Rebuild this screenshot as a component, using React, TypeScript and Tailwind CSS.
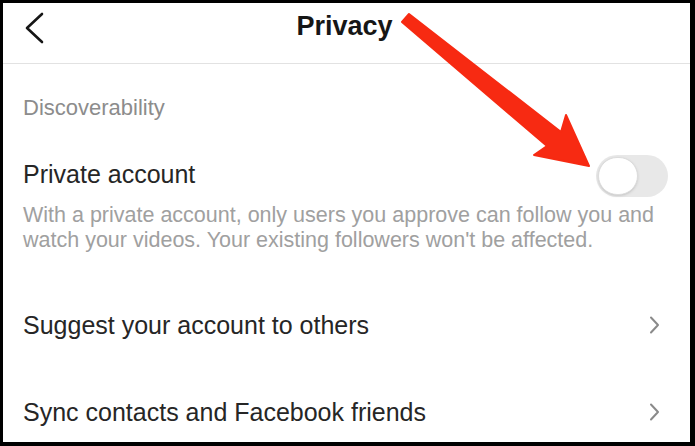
import { useState } from 'react'

function Chevron({ className }: { className?: string }) {
  return (
    <svg width="12" height="20" viewBox="0 0 12 20" className={className}>
      <path d="M3 2.5 L10 10 L3 17.5" fill="none" stroke="#8a8a8a" strokeWidth="2" strokeLinecap="round" strokeLinejoin="round" />
    </svg>
  )
}

export default function App() {
  const [isPrivate, setIsPrivate] = useState(false)

  return (
    <div className="w-[695px] h-[446px] bg-black pt-[3px] pl-[3px] pr-[5px] pb-[4px]" style={{ fontFamily: '"Liberation Sans", Arial, sans-serif' }}>
      <div className="relative w-full h-full bg-white flex flex-col overflow-hidden">

        {/* Header */}
        <div className="h-[61px] shrink-0 border-b border-[#e2e2e2] flex items-center relative">
          <svg width="24" height="34" viewBox="0 0 24 34" className="absolute left-[19px] top-[8px]">
            <path d="M20 3 L5 17 L20 31" fill="none" stroke="#161616" strokeWidth="2.6" strokeLinecap="round" strokeLinejoin="round" />
          </svg>
          <h1 className="w-full text-center text-[27px] leading-[32px] font-bold text-[#161616] -mt-[14px] pr-[4px]">Privacy</h1>
        </div>

        {/* Discoverability */}
        <div className="flex flex-col pl-[20px] pr-[30px]">
          <p className="text-[22px] leading-[24px] text-[#8c8c8c] mt-[32px]">Discoverability</p>

          <div className="flex items-center justify-between mt-[35px] -mr-[8px]">
            <p className="text-[25px] leading-[28px] text-[#262626] -mt-[4px]">Private account</p>
            <button
              onClick={() => setIsPrivate(!isPrivate)}
              className={`w-[72px] h-[42px] rounded-full p-[2px] flex ${isPrivate ? 'bg-[#20d5ec] justify-end' : 'bg-[#e8e8e8] justify-start'}`}
            >
              <span className="w-[40px] h-[38px] rounded-full bg-white border border-[#dcdcdc] shadow-sm" />
            </button>
          </div>

          <p className="text-[21.5px] leading-[25px] text-[#a0a0a0] mt-[6px] w-[655px]">
            With a private account, only users you approve can follow you and watch your videos. Your existing followers won't be affected.
          </p>

          <div className="flex items-center justify-between h-[28px] mt-[58px]">
            <p className="text-[25px] leading-[28px] text-[#262626]">Suggest your account to others</p>
            <Chevron />
          </div>

          <div className="flex items-center justify-between h-[28px] mt-[59px]">
            <p className="text-[25px] leading-[28px] text-[#262626]">Sync contacts and Facebook friends</p>
            <Chevron />
          </div>
        </div>

        {/* Annotation arrow */}
        <svg width="692" height="442" viewBox="0 0 692 442" className="absolute left-0 top-0 pointer-events-none">
          <polygon
            points="406,11 558,129 563,112 586,163 531,152 544,143 399,19"
            fill="#f72a12"
            stroke="#f72a12"
            strokeWidth="2"
            strokeLinejoin="round"
          />
        </svg>
      </div>
    </div>
  )
}
